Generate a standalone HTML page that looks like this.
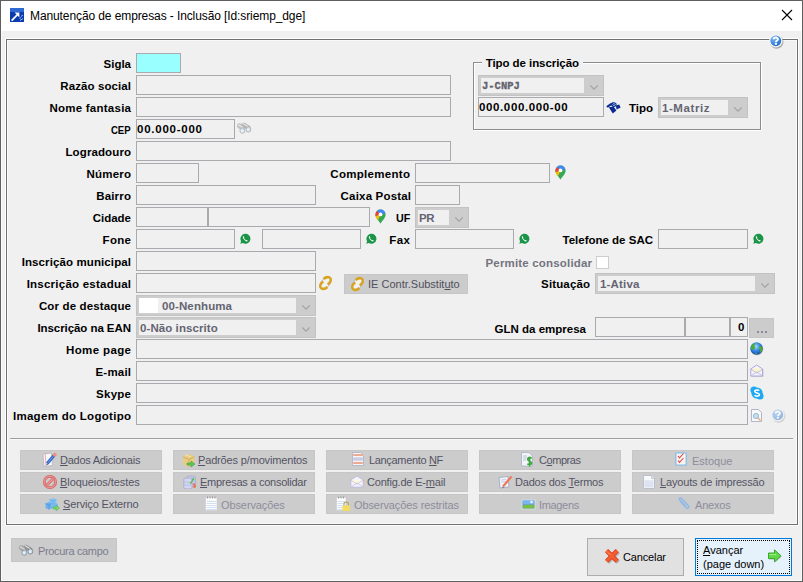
<!DOCTYPE html>
<html><head><meta charset="utf-8">
<style>
*{box-sizing:border-box;margin:0;padding:0}
html,body{width:803px;height:582px;overflow:hidden;background:#f0f0f0;font-family:"Liberation Sans",sans-serif}
.a{position:absolute}
.lbl{position:absolute;font-weight:bold;font-size:11.5px;color:#000;white-space:nowrap;line-height:14px}
.fld{position:absolute;border:1px solid #a9a9ae;background:#f0f0f0}
.ftx{position:absolute;font-weight:bold;font-size:11.5px;white-space:nowrap;line-height:14px;color:#000}
.ctx{color:#646472}
.mono{font-family:"Liberation Mono",monospace;font-size:10.5px;color:#62626e;-webkit-text-stroke:0.3px #62626e}
.cmb{position:absolute;background:#cdcdcd;border:1px solid #c3c3c3}
.bt{position:absolute;font-size:11px;white-space:nowrap;line-height:14px;color:#545464}
u{text-decoration:underline;text-underline-offset:1px}
</style></head><body>

<div class="a" style="left:0;top:0;width:803px;height:582px;border:1px solid #5f5f5f;box-shadow:inset 0 0 0 1px #fafafa"></div>
<div class="a" style="left:1px;top:1px;width:801px;height:30px;background:#fff"></div>
<svg class="a" style="left:10px;top:8px" width="14" height="14" viewBox="0 0 14 14"><rect width="14" height="14" fill="#0a3cae"/><rect width="14" height="4" fill="#2f6ad4"/><path d="M1.6 12.6 L8 6.2" stroke="#fff" stroke-width="1.7" fill="none"/><path d="M4.6 4.6 L9.4 4.6 L9.4 9.4 Z" fill="#fff"/><path d="M11 8.5 l2 -1.5 M10 12.5 l3 -2 M9.5 10.5 l1.5 -1" stroke="#9ab8f0" stroke-width="1"/></svg>
<div class="a" style="left:30px;top:9px;font-size:12px;line-height:15px;color:#000;letter-spacing:-0.1px;white-space:nowrap">Manutenção de empresas - Inclusão [Id:sriemp_dge]</div>
<svg class="a" style="left:781px;top:9px" width="12" height="12"><path d="M1 1 L11 11 M11 1 L1 11" stroke="#000" stroke-width="1.1"/></svg>
<div class="a" style="left:6px;top:39px;width:792px;height:486px;border:1px solid #707070;box-shadow:inset 0 0 0 1px #f9f9f9,0 0 0 1px #fff"></div>
<svg class="a" style="left:768px;top:33px;" width="16" height="16" viewBox="0 0 16 16"><defs><radialGradient id="hg768" cx="0.35" cy="0.3" r="0.8"><stop offset="0" stop-color="#7ab8f4"/><stop offset="0.6" stop-color="#3f8ae0"/><stop offset="1" stop-color="#1a5cc0"/></radialGradient></defs><circle cx="8.6" cy="8.8" r="6.9" fill="#707070" opacity="0.55"/><circle cx="7.8" cy="7.8" r="6.8" fill="#f4f4f4"/><circle cx="7.8" cy="7.8" r="5.4" fill="url(#hg768)"/><path d="M5.6 6.3 C5.6 3.9 10 3.9 10 6.3 C10 7.6 7.9 7.6 7.9 9.2" stroke="#fff" stroke-width="1.9" fill="none"/><rect x="6.9" y="10" width="2" height="1.8" fill="#fff"/></svg>
<div class="lbl" style="right:672.00px;top:57px;color:#000;letter-spacing:0.0px">Sigla</div>
<div class="lbl" style="right:671.91px;top:79px;color:#000;letter-spacing:0.091px">Razão social</div>
<div class="lbl" style="right:671.75px;top:101px;color:#000;letter-spacing:0.25px">Nome fantasia</div>
<div class="lbl" style="right:672.00px;top:123px;color:#000;letter-spacing:0px;transform:scaleX(0.833);transform-origin:100% 50%">CEP</div>
<div class="lbl" style="right:671.89px;top:145px;color:#000;letter-spacing:0.111px">Logradouro</div>
<div class="lbl" style="right:671.80px;top:167px;color:#000;letter-spacing:0.2px">Número</div>
<div class="lbl" style="right:671.80px;top:189px;color:#000;letter-spacing:0.2px">Bairro</div>
<div class="lbl" style="right:672.00px;top:211px;color:#000;letter-spacing:0.0px">Cidade</div>
<div class="lbl" style="right:671.67px;top:233px;color:#000;letter-spacing:0.333px">Fone</div>
<div class="lbl" style="right:671.89px;top:255px;color:#000;letter-spacing:0.111px">Inscrição municipal</div>
<div class="lbl" style="right:671.76px;top:277px;color:#000;letter-spacing:0.235px">Inscrição estadual</div>
<div class="lbl" style="right:671.86px;top:299px;color:#000;letter-spacing:0.143px">Cor de destaque</div>
<div class="lbl" style="right:672.07px;top:321px;color:#000;letter-spacing:-0.067px">Inscrição na EAN</div>
<div class="lbl" style="right:671.62px;top:343px;color:#000;letter-spacing:0.375px">Home page</div>
<div class="lbl" style="right:671.80px;top:365px;color:#000;letter-spacing:0.2px">E-mail</div>
<div class="lbl" style="right:671.75px;top:387px;color:#000;letter-spacing:0.25px">Skype</div>
<div class="lbl" style="right:671.71px;top:409px;color:#000;letter-spacing:0.294px">Imagem do Logotipo</div>
<div class="fld" style="left:136px;top:53px;width:45px;height:20px;background:#99ffff"></div>
<div class="fld" style="left:136px;top:75px;width:315px;height:20px"></div>
<div class="fld" style="left:136px;top:97px;width:315px;height:20px"></div>
<div class="fld" style="left:136px;top:119px;width:99px;height:20px"></div>
<div class="ftx" style="left:137px;top:122px;letter-spacing:0.75px">00.000-000</div>
<svg class="a" style="left:236px;top:122px;opacity:0.6" width="16" height="12" viewBox="0 0 16 12"><path d="M1 3.2 C1 1.6 3 1 4.5 1.6 L9.5 4.8 L7 9 L2 6 C1.3 5.5 1 4.5 1 3.2 Z" fill="#a4a4a4"/><path d="M5.5 1.8 C6 0.6 8 0.4 9 1 L14.6 4.6 L12.5 8.6 L7.5 5.4 Z" fill="#8e8e8e"/><path d="M2 2.6 L7 5.6 M6.6 1.4 L12 4.6" stroke="#f2f2f2" stroke-width="1.1"/><ellipse cx="6.4" cy="8.6" rx="2.5" ry="2.7" fill="#c4dcf4" stroke="#7c7c7c" stroke-width="0.7"/><ellipse cx="12.4" cy="7.4" rx="2.4" ry="2.7" fill="#c4dcf4" stroke="#6c6c6c" stroke-width="0.7"/><ellipse cx="6" cy="9" rx="1.2" ry="1.3" fill="#eaf4ff"/><ellipse cx="12" cy="7.8" rx="1.2" ry="1.3" fill="#eaf4ff"/></svg>
<div class="fld" style="left:136px;top:141px;width:315px;height:20px"></div>
<div class="fld" style="left:136px;top:163px;width:63px;height:20px"></div>
<div class="lbl" style="right:392.70px;top:167px;color:#000;letter-spacing:0.3px">Complemento</div>
<div class="fld" style="left:415px;top:163px;width:135px;height:20px"></div>
<svg class="a" style="left:555px;top:165px" width="11" height="15" viewBox="0 0 11 15"><defs><clipPath id="pc555165"><path d="M5.5 14.8 C4.6 12.4 0.4 9.4 0.4 5.5 A5.1 5.1 0 0 1 10.6 5.5 C10.6 9.4 6.4 12.4 5.5 14.8 Z"/></clipPath></defs><g clip-path="url(#pc555165)"><rect width="11" height="15" fill="#34a853"/><path d="M0 0 L11 0 L11 4.2 L5.5 5.5 L1.2 1.6 Z" fill="#4285f4"/><path d="M0 0 L1.2 1.6 L5.5 5.5 L0 7.6 Z" fill="#ea4335"/><path d="M0 7.6 L5.5 5.5 L2.6 12 L0 12 Z" fill="#fbbc04"/></g><circle cx="5.5" cy="5.4" r="1.9" fill="#fff"/></svg>
<div class="fld" style="left:136px;top:185px;width:180px;height:20px"></div>
<div class="lbl" style="right:391.82px;top:189px;color:#000;letter-spacing:0.182px">Caixa Postal</div>
<div class="fld" style="left:415px;top:185px;width:45px;height:20px"></div>
<div class="fld" style="left:136px;top:207px;width:72px;height:20px"></div>
<div class="fld" style="left:208px;top:207px;width:162px;height:20px"></div>
<svg class="a" style="left:375px;top:209px" width="11" height="15" viewBox="0 0 11 15"><defs><clipPath id="pc375209"><path d="M5.5 14.8 C4.6 12.4 0.4 9.4 0.4 5.5 A5.1 5.1 0 0 1 10.6 5.5 C10.6 9.4 6.4 12.4 5.5 14.8 Z"/></clipPath></defs><g clip-path="url(#pc375209)"><rect width="11" height="15" fill="#34a853"/><path d="M0 0 L11 0 L11 4.2 L5.5 5.5 L1.2 1.6 Z" fill="#4285f4"/><path d="M0 0 L1.2 1.6 L5.5 5.5 L0 7.6 Z" fill="#ea4335"/><path d="M0 7.6 L5.5 5.5 L2.6 12 L0 12 Z" fill="#fbbc04"/></g><circle cx="5.5" cy="5.4" r="1.9" fill="#fff"/></svg>
<div class="lbl" style="right:393.00px;top:211px;color:#000;letter-spacing:0px;transform:scaleX(0.933);transform-origin:100% 50%">UF</div>
<div class="cmb" style="left:415px;top:207px;width:54px;height:21px"></div>
<div class="a" style="left:418px;top:210px;width:31px;height:15px;background:#f0f0f0"></div>
<svg class="a" style="left:455px;top:217px" width="8" height="5"><path d="M0.3 0.5 L4 4.2 L7.7 0.5" fill="none" stroke="#a2a2a2" stroke-width="1.1"/></svg>
<div class="ftx ctx" style="left:419px;top:211px;letter-spacing:-0.45px">PR</div>
<div class="fld" style="left:136px;top:229px;width:99px;height:20px"></div>
<svg class="a" style="left:239px;top:233px" width="12" height="12" viewBox="0 0 12 12"><path d="M1.3 10.8 L2.1 8.3 A5 5 0 1 1 3.9 10.1 Z" fill="#1a9548"/><path d="M3.9 3.3 C3.5 4.6 4.6 6.8 7 8.2 C7.9 8.6 8.6 8.3 8.8 7.7 L7.8 6.9 L7.1 7.3 C6.1 6.8 5.3 6 4.9 5 L5.4 4.4 L4.6 3.2 Z" fill="#fff"/></svg>
<div class="fld" style="left:262px;top:229px;width:99px;height:20px"></div>
<svg class="a" style="left:365px;top:233px" width="12" height="12" viewBox="0 0 12 12"><path d="M1.3 10.8 L2.1 8.3 A5 5 0 1 1 3.9 10.1 Z" fill="#1a9548"/><path d="M3.9 3.3 C3.5 4.6 4.6 6.8 7 8.2 C7.9 8.6 8.6 8.3 8.8 7.7 L7.8 6.9 L7.1 7.3 C6.1 6.8 5.3 6 4.9 5 L5.4 4.4 L4.6 3.2 Z" fill="#fff"/></svg>
<div class="lbl" style="right:392.50px;top:233px;color:#000;letter-spacing:0.5px">Fax</div>
<div class="fld" style="left:415px;top:229px;width:99px;height:20px"></div>
<svg class="a" style="left:518px;top:233px" width="12" height="12" viewBox="0 0 12 12"><path d="M1.3 10.8 L2.1 8.3 A5 5 0 1 1 3.9 10.1 Z" fill="#1a9548"/><path d="M3.9 3.3 C3.5 4.6 4.6 6.8 7 8.2 C7.9 8.6 8.6 8.3 8.8 7.7 L7.8 6.9 L7.1 7.3 C6.1 6.8 5.3 6 4.9 5 L5.4 4.4 L4.6 3.2 Z" fill="#fff"/></svg>
<div class="lbl" style="right:150.00px;top:233px;color:#000;letter-spacing:0.0px">Telefone de SAC</div>
<div class="fld" style="left:658px;top:229px;width:90px;height:20px"></div>
<svg class="a" style="left:752px;top:233px" width="12" height="12" viewBox="0 0 12 12"><path d="M1.3 10.8 L2.1 8.3 A5 5 0 1 1 3.9 10.1 Z" fill="#1a9548"/><path d="M3.9 3.3 C3.5 4.6 4.6 6.8 7 8.2 C7.9 8.6 8.6 8.3 8.8 7.7 L7.8 6.9 L7.1 7.3 C6.1 6.8 5.3 6 4.9 5 L5.4 4.4 L4.6 3.2 Z" fill="#fff"/></svg>
<div class="fld" style="left:136px;top:251px;width:180px;height:20px"></div>
<div class="lbl" style="right:210.82px;top:256px;color:#74747f;letter-spacing:0.176px">Permite consolidar</div>
<div class="a" style="left:596px;top:256px;width:13px;height:13px;border:1px solid #cdcdcd;background:#fff"></div>
<div class="fld" style="left:136px;top:273px;width:180px;height:20px"></div>
<svg class="a" style="left:318px;top:275px" width="15" height="16" viewBox="0 0 15 16"><ellipse cx="7.5" cy="8" rx="7.4" ry="4.3" transform="rotate(-50 7.5 8)" fill="#f2f2f2" stroke="#a0a0a0" stroke-width="0.6"/><path d="M5.6 4 C8.6 1 13.8 1.6 12.6 6.2 C12.1 7.8 10.8 8.8 9.6 9.4" stroke="#d8a420" stroke-width="2.5" fill="none"/><path d="M9.4 12 C6.4 15 1.2 14.4 2.4 9.8 C2.9 8.2 4.2 7.2 5.4 6.6" stroke="#d8a420" stroke-width="2.5" fill="none"/></svg>
<div class="a" style="left:344px;top:274px;width:124px;height:20px;background:#cccccc;border:1px solid #c6c6c6"></div>
<svg class="a" style="left:350px;top:276px" width="15" height="16" viewBox="0 0 15 16"><ellipse cx="7.5" cy="8" rx="7.4" ry="4.3" transform="rotate(-50 7.5 8)" fill="#f2f2f2" stroke="#a0a0a0" stroke-width="0.6"/><path d="M5.6 4 C8.6 1 13.8 1.6 12.6 6.2 C12.1 7.8 10.8 8.8 9.6 9.4" stroke="#d8a420" stroke-width="2.5" fill="none"/><path d="M9.4 12 C6.4 15 1.2 14.4 2.4 9.8 C2.9 8.2 4.2 7.2 5.4 6.6" stroke="#d8a420" stroke-width="2.5" fill="none"/></svg>
<div class="bt" style="left:368px;top:277px;color:#4f4f5e;letter-spacing:0.0px">IE Contr.Substit<u>u</u>to</div>
<div class="lbl" style="right:212.86px;top:277px;color:#000;letter-spacing:0.143px">Situação</div>
<div class="cmb" style="left:595px;top:273px;width:180px;height:21px"></div>
<div class="a" style="left:598px;top:276px;width:157px;height:15px;background:#f0f0f0"></div>
<svg class="a" style="left:761px;top:283px" width="8" height="5"><path d="M0.3 0.5 L4 4.2 L7.7 0.5" fill="none" stroke="#a2a2a2" stroke-width="1.1"/></svg>
<div class="ftx ctx" style="left:600px;top:277px;letter-spacing:0.167px">1-Ativa</div>
<div class="cmb" style="left:136px;top:295px;width:180px;height:21px"></div>
<div class="a" style="left:139px;top:298px;width:157px;height:15px;background:#f0f0f0"></div>
<svg class="a" style="left:302px;top:305px" width="8" height="5"><path d="M0.3 0.5 L4 4.2 L7.7 0.5" fill="none" stroke="#a2a2a2" stroke-width="1.1"/></svg>
<div class="a" style="left:139px;top:298px;width:19px;height:15px;background:#fff"></div>
<div class="ftx ctx" style="left:162px;top:299px;letter-spacing:0.111px">00-Nenhuma</div>
<div class="cmb" style="left:136px;top:317px;width:180px;height:21px"></div>
<div class="a" style="left:139px;top:320px;width:157px;height:15px;background:#f0f0f0"></div>
<svg class="a" style="left:302px;top:327px" width="8" height="5"><path d="M0.3 0.5 L4 4.2 L7.7 0.5" fill="none" stroke="#a2a2a2" stroke-width="1.1"/></svg>
<div class="ftx ctx" style="left:140px;top:321px;letter-spacing:0.077px">0-Não inscrito</div>
<div class="lbl" style="right:217.00px;top:322px;color:#000;letter-spacing:0.0px">GLN da empresa</div>
<div class="fld" style="left:595px;top:317px;width:90px;height:20px"></div>
<div class="fld" style="left:685px;top:317px;width:45px;height:20px"></div>
<div class="fld" style="left:730px;top:317px;width:18px;height:20px"></div>
<div class="ftx" style="left:738px;top:320px;">0</div>
<div class="a" style="left:749px;top:318px;width:25px;height:20px;background:#cccccc;border:1px solid #c6c6c6"></div>
<div class="a" style="left:757px;top:331px;width:10px;height:2px;background:repeating-linear-gradient(90deg,#8a8a9c 0 2px,transparent 2px 4px)"></div>
<div class="fld" style="left:136px;top:339px;width:612px;height:20px"></div>
<div class="fld" style="left:136px;top:361px;width:612px;height:20px"></div>
<div class="fld" style="left:136px;top:383px;width:612px;height:20px"></div>
<div class="fld" style="left:136px;top:405px;width:612px;height:20px"></div>
<svg class="a" style="left:750px;top:342px" width="14" height="14" viewBox="0 0 14 14"><defs><radialGradient id="gl" cx="0.45" cy="0.35" r="0.65"><stop offset="0" stop-color="#a8d8ff"/><stop offset="0.5" stop-color="#3a8ae8"/><stop offset="1" stop-color="#1548b0"/></radialGradient></defs><circle cx="7" cy="7" r="6.3" fill="#555" opacity="0.35"/><circle cx="6.5" cy="6.5" r="6.2" fill="url(#gl)"/><path d="M1 5 C1.5 3 3 1.5 4.5 1.3 C5.5 2 5 3 4 3.3 C5 4.5 5.5 6 4.5 7 C3.5 8 2 7.5 1.2 7 Z" fill="#48b030"/><path d="M9.5 4.5 C10.5 4 12 5 12.6 6.5 C12.5 8.5 11.5 10 10 10.8 C9.5 9.5 10.5 8.5 9.8 7.5 C9 6.5 8.8 5.2 9.5 4.5 Z" fill="#48b030"/><path d="M5 10.5 L7 11 L6.5 12.3 L5 11.8 Z M7 1.2 L8.5 1.5 L8 2.5 Z" fill="#48b030"/></svg>
<svg class="a" style="left:750px;top:364px" width="14" height="13" viewBox="0 0 14 13"><path d="M1.6 5.6 L7.2 1.8 L13.4 5.6 L13.4 12.8 L1.6 12.8 Z" fill="#505050" opacity="0.25"/><path d="M0.8 5 L6.6 1 L12.6 5 L12.6 12 L0.8 12 Z" fill="#f4f4fc" stroke="#a4a0dc" stroke-width="0.9"/><path d="M2.4 4.4 L11 4.4 L11 7.2 L6.7 9.2 L2.4 7.2 Z" fill="#fbf2c8"/><path d="M0.8 12 L6.7 7.8 L12.6 12 M0.8 5 L6.7 9.2 L12.6 5" fill="none" stroke="#b8b4e4" stroke-width="0.8"/></svg>
<svg class="a" style="left:750px;top:386px" width="14" height="14" viewBox="0 0 14 14"><circle cx="4" cy="4" r="3.6" fill="#1eaaf1"/><circle cx="10" cy="10" r="3.6" fill="#1eaaf1"/><circle cx="7" cy="7" r="5.6" fill="#1eaaf1"/><path d="M9.2 4.6 C8.5 3.6 4.6 3.5 4.7 5.4 C4.8 7.4 9.4 6.4 9.4 8.6 C9.4 10.6 5.4 10.5 4.6 9.2" stroke="#fff" stroke-width="1.5" fill="none"/></svg>
<svg class="a" style="left:751px;top:409px" width="12" height="13" viewBox="0 0 12 13"><path d="M0.5 0.5 L7.5 0.5 L10.5 3.5 L10.5 12.5 L0.5 12.5 Z" fill="#f6f8fb" stroke="#a7b0bd" stroke-width="0.9"/><circle cx="5" cy="7" r="2.6" fill="#bfe0f5" stroke="#8fa8c0" stroke-width="0.8"/><path d="M7 9 L9.5 11.5" stroke="#f0a060" stroke-width="1.3"/></svg>
<svg class="a" style="left:770px;top:407px;opacity:0.45;" width="16" height="16" viewBox="0 0 16 16"><defs><radialGradient id="hg770" cx="0.35" cy="0.3" r="0.8"><stop offset="0" stop-color="#7ab8f4"/><stop offset="0.6" stop-color="#3f8ae0"/><stop offset="1" stop-color="#1a5cc0"/></radialGradient></defs><circle cx="8.6" cy="8.8" r="6.9" fill="#707070" opacity="0.55"/><circle cx="7.8" cy="7.8" r="6.8" fill="#f4f4f4"/><circle cx="7.8" cy="7.8" r="5.4" fill="url(#hg770)"/><path d="M5.6 6.3 C5.6 3.9 10 3.9 10 6.3 C10 7.6 7.9 7.6 7.9 9.2" stroke="#fff" stroke-width="1.9" fill="none"/><rect x="6.9" y="10" width="2" height="1.8" fill="#fff"/></svg>
<div class="a" style="left:10px;top:438px;width:783px;height:2px;border-top:1px solid #a0a0a0;border-bottom:1px solid #f8f8f8"></div>
<div class="a" style="left:473px;top:62px;width:288px;height:68px;border:1px solid #8c8c8c;box-shadow:inset 1px 1px 0 #fff,1px 1px 0 #fff"></div>
<div class="a" style="left:482px;top:56px;width:101px;height:12px;background:#f0f0f0"></div>
<div class="lbl" style="right:224.06px;top:56px;color:#000;letter-spacing:-0.062px">Tipo de inscrição</div>
<div class="cmb" style="left:478px;top:75px;width:126px;height:21px"></div>
<div class="a" style="left:481px;top:78px;width:103px;height:15px;background:#f0f0f0"></div>
<svg class="a" style="left:590px;top:85px" width="8" height="5"><path d="M0.3 0.5 L4 4.2 L7.7 0.5" fill="none" stroke="#a2a2a2" stroke-width="1.1"/></svg>
<div class="ftx mono" style="left:482px;top:79px;">J-CNPJ</div>
<div class="fld" style="left:478px;top:97px;width:126px;height:20px"></div>
<div class="ftx" style="left:479px;top:100px;letter-spacing:0.62px">000.000.000-00</div>
<svg class="a" style="left:606px;top:102px" width="15" height="12" viewBox="0 0 15 12"><path d="M0.2 4.2 L4.8 1 L6.5 2.6 L1.8 5.8 Z" fill="#0a2a90"/><path d="M5 1.4 C6 -0.2 9.5 -0.2 10.5 1.8 C11 3.2 10 4.8 8 5 C6.5 5 5.2 3.8 5 2.6 Z" fill="#0a2a90"/><path d="M6.6 2.6 C7.2 1.2 9.2 1.4 9.3 2.6 C9 3.6 7.6 3.8 7 3.2" stroke="#c8d4f4" stroke-width="0.8" fill="none"/><path d="M9.8 3.6 L13.2 2.4 L14.6 5.6 L10.6 7.4 Z" fill="#0a2a90"/><path d="M2.8 5.2 L7.5 4.6 L10.4 8.6 L6.8 11.6 Z" fill="#0a2a90"/></svg>
<div class="lbl" style="right:150.00px;top:101px;color:#000;letter-spacing:0.0px">Tipo</div>
<div class="cmb" style="left:658px;top:97px;width:90px;height:21px"></div>
<div class="a" style="left:661px;top:100px;width:67px;height:15px;background:#f0f0f0"></div>
<svg class="a" style="left:734px;top:107px" width="8" height="5"><path d="M0.3 0.5 L4 4.2 L7.7 0.5" fill="none" stroke="#a2a2a2" stroke-width="1.1"/></svg>
<div class="ftx ctx" style="left:662px;top:101px;letter-spacing:0.571px">1-Matriz</div>
<div class="a" style="left:20px;top:450px;width:142px;height:20px;background:#cccccc;border:1px solid #c6c6c6"></div>
<div class="a" style="left:173px;top:450px;width:142px;height:20px;background:#cccccc;border:1px solid #c6c6c6"></div>
<div class="a" style="left:326px;top:450px;width:142px;height:20px;background:#cccccc;border:1px solid #c6c6c6"></div>
<div class="a" style="left:479px;top:450px;width:142px;height:20px;background:#cccccc;border:1px solid #c6c6c6"></div>
<div class="a" style="left:632px;top:450px;width:142px;height:20px;background:#cccccc;border:1px solid #c6c6c6"></div>
<div class="a" style="left:20px;top:472px;width:142px;height:20px;background:#cccccc;border:1px solid #c6c6c6"></div>
<div class="a" style="left:173px;top:472px;width:142px;height:20px;background:#cccccc;border:1px solid #c6c6c6"></div>
<div class="a" style="left:326px;top:472px;width:142px;height:20px;background:#cccccc;border:1px solid #c6c6c6"></div>
<div class="a" style="left:479px;top:472px;width:142px;height:20px;background:#cccccc;border:1px solid #c6c6c6"></div>
<div class="a" style="left:632px;top:472px;width:142px;height:20px;background:#cccccc;border:1px solid #c6c6c6"></div>
<div class="a" style="left:20px;top:494px;width:142px;height:20px;background:#cccccc;border:1px solid #c6c6c6"></div>
<div class="a" style="left:173px;top:494px;width:142px;height:20px;background:#cccccc;border:1px solid #c6c6c6"></div>
<div class="a" style="left:326px;top:494px;width:142px;height:20px;background:#cccccc;border:1px solid #c6c6c6"></div>
<div class="a" style="left:479px;top:494px;width:142px;height:20px;background:#cccccc;border:1px solid #c6c6c6"></div>
<div class="a" style="left:632px;top:494px;width:142px;height:20px;background:#cccccc;border:1px solid #c6c6c6"></div>
<div class="bt" style="left:60px;top:453px;color:#545464;letter-spacing:-0.267px"><u>D</u>ados Adicionais</div>
<div class="bt" style="left:198px;top:453px;color:#545464;letter-spacing:-0.158px"><u>P</u>adrões p/movimentos</div>
<div class="bt" style="left:369px;top:453px;color:#545464;letter-spacing:-0.333px">Lançamento <u>N</u>F</div>
<div class="bt" style="left:539px;top:453px;color:#545464;letter-spacing:-0.45px">C<u>o</u>mpras</div>
<div class="bt" style="left:692px;top:454px;color:#8c8c9c;letter-spacing:0.0px">Estoque</div>
<div class="bt" style="left:60px;top:475px;color:#545464;letter-spacing:-0.067px"><u>B</u>loqueios/testes</div>
<div class="bt" style="left:200px;top:475px;color:#545464;letter-spacing:-0.25px"><u>E</u>mpresas a consolidar</div>
<div class="bt" style="left:367px;top:475px;color:#545464;letter-spacing:-0.2px">Config.de E-<u>m</u>ail</div>
<div class="bt" style="left:515px;top:475px;color:#545464;letter-spacing:-0.2px">Dados dos <u>T</u>ermos</div>
<div class="bt" style="left:660px;top:475px;color:#545464;letter-spacing:-0.158px"><u>L</u>ayouts de impressão</div>
<div class="bt" style="left:63px;top:497px;color:#545464;letter-spacing:-0.143px"><u>S</u>erviço Externo</div>
<div class="bt" style="left:221px;top:498px;color:#8c8c9c;letter-spacing:-0.1px">Observações</div>
<div class="bt" style="left:354px;top:498px;color:#8c8c9c;letter-spacing:-0.1px">Observações restritas</div>
<div class="bt" style="left:539px;top:498px;color:#8c8c9c;letter-spacing:-0.333px">Imagens</div>
<div class="bt" style="left:695px;top:498px;color:#8c8c9c;letter-spacing:-0.2px">Anexos</div>
<svg class="a" style="left:42px;top:452px" width="15" height="15" viewBox="0 0 15 15"><path d="M1 2 L9.5 1 L10.5 13.5 L2 14.5 Z" fill="#f8f8fa" stroke="#b4b4c4" stroke-width="0.8"/>
<path d="M3.2 2 L4 14" stroke="#e89a9a" stroke-width="0.8"/>
<path d="M5.2 11.5 L12 3.5" stroke="#3a68c8" stroke-width="3.2"/>
<path d="M6 10.6 L11.4 4.2" stroke="#6a9ae8" stroke-width="1"/>
<circle cx="12.8" cy="2.6" r="1.9" fill="#f0907a"/>
<path d="M5 11.6 L4.2 13.4 L6.2 12.6 Z" fill="#405080"/></svg>
<svg class="a" style="left:43px;top:475px" width="14" height="14" viewBox="0 0 14 14"><circle cx="7" cy="7" r="5.6" fill="none" stroke="#cf6464" stroke-width="2.8"/>
<circle cx="7" cy="7" r="5.6" fill="none" stroke="#ec9090" stroke-width="1.4"/>
<path d="M3.3 10.7 L10.7 3.3" stroke="#d46a6a" stroke-width="3"/>
<path d="M3.8 10.2 L10.2 3.8" stroke="#ee9494" stroke-width="1.4"/></svg>
<svg class="a" style="left:45px;top:497px" width="15" height="14" viewBox="0 0 15 14"><path d="M4.5 2.5 L8 1 L11.5 2.5 L11.5 7 L8 8.5 L4.5 7 Z" fill="#88c4f4"/>
<path d="M4.5 2.5 L8 4 L11.5 2.5 M8 4 L8 8.5" stroke="#5aa0e0" stroke-width="0.6" fill="none"/>
<path d="M0.5 6.5 L4 5 L7.5 6.5 L7.5 11 L4 12.5 L0.5 11 Z" fill="#6cb0ee"/>
<path d="M0.5 6.5 L4 8 L7.5 6.5 M4 8 L4 12.5" stroke="#4a90d8" stroke-width="0.6" fill="none"/>
<path d="M6 7 L9.5 5.5 L13 7 L13 10 L9.5 11.5 L6 10 Z" fill="#78baf0"/>
<path d="M8 10 L11 10 L11 8.2 L14.5 11 L11 13.8 L11 12 L8 12 Z" fill="#78d86a" stroke="#4cb044" stroke-width="0.5"/></svg>
<svg class="a" style="left:182px;top:453px" width="14" height="15" viewBox="0 0 14 15"><path d="M1 4 L6.5 1 L12.5 3.5 L12.5 11 L7 14 L1 11.5 Z" fill="#e8cc80"/>
<path d="M1 4 L7 6.5 L12.5 3.5 M7 6.5 L7 14" stroke="#c8a45a" stroke-width="0.7" fill="none"/>
<path d="M3 1.5 L9 4" stroke="#f4e0a8" stroke-width="1.2"/>
<path d="M5 10 L9 10 L9 8 L13 11 L9 14 L9 12 L5 12 Z" fill="#58c858" stroke="#3a9a3a" stroke-width="0.5"/></svg>
<svg class="a" style="left:183px;top:475px" width="14" height="14" viewBox="0 0 14 14"><path d="M4 2 C4 0.8 12.5 0.8 12.5 2 L12.5 11 C12.5 12.2 4 12.2 4 11 Z" fill="#c4c8e8" stroke="#9a9ec8" stroke-width="0.6"/>
<path d="M0.8 4 C0.8 2.8 9 2.8 9 4 L9 13 C9 14.2 0.8 14.2 0.8 13 Z" fill="#d4d6f0" stroke="#9a9ec8" stroke-width="0.6"/>
<path d="M0.8 6.5 C0.8 7.5 9 7.5 9 6.5 M0.8 9.5 C0.8 10.5 9 10.5 9 9.5" stroke="#a8acd4" stroke-width="0.6" fill="none"/>
<path d="M6.5 8.5 L9.5 4.5 L8 4.5 L10.5 2.5 L11.5 5.5 L10.5 5 L8 9 Z" fill="#54c054"/>
<path d="M9.5 9 L12 8 L12.5 11 L13.5 10.5 L12 13.5 L9.5 11.5 L11 11.5 Z" fill="#f07050"/></svg>
<svg class="a" style="left:205px;top:496px" width="13" height="15" viewBox="0 0 13 15"><path d="M0.5 1.5 L12 1.5 L12 14.5 L0.5 14.5 Z" fill="#fdfdfd" stroke="#c8c8d0" stroke-width="0.6"/>
<path d="M1.5 5.5 L11 5.5 M1.5 7.5 L11 7.5 M1.5 9.5 L11 9.5 M1.5 11.5 L11 11.5 M1.5 13.5 L11 13.5" stroke="#c4d8ec" stroke-width="0.8"/>
<path d="M2.5 0.5 L2.5 2.5 M5 0.5 L5 2.5 M7.5 0.5 L7.5 2.5 M10 0.5 L10 2.5" stroke="#888" stroke-width="0.8"/></svg>
<svg class="a" style="left:352px;top:452px" width="12" height="14" viewBox="0 0 12 14"><path d="M0.5 0.5 L8.5 0.5 L11.5 3.5 L11.5 13.5 L0.5 13.5 Z" fill="#f6f6fa" stroke="#a8b0c0" stroke-width="0.8"/>
<path d="M1.2 3 L10.8 3" stroke="#f0a890" stroke-width="2"/>
<path d="M1.2 7 L10.8 7" stroke="#c8cee0" stroke-width="3.5"/>
<path d="M1.2 11 L10.8 11" stroke="#f0a890" stroke-width="2"/></svg>
<svg class="a" style="left:350px;top:475px" width="14" height="13" viewBox="0 0 14 13"><path d="M0.8 5 L7 1 L13.2 5 L13.2 12.2 L0.8 12.2 Z" fill="#f4f2fc" stroke="#b8b4d8" stroke-width="0.8"/>
<path d="M2.5 4.5 L11.5 4.5 L11.5 7.5 L7 9.5 L2.5 7.5 Z" fill="#fdf8e4"/>
<path d="M0.8 12.2 L7 7.8 L13.2 12.2 M0.8 5 L7 9.2 L13.2 5" fill="none" stroke="#c4c0e0" stroke-width="0.8"/></svg>
<svg class="a" style="left:336px;top:496px" width="14" height="15" viewBox="0 0 14 15"><path d="M0.5 1.5 L10 1.5 L10 14.5 L0.5 14.5 Z" fill="#fdfdfd" stroke="#c8c8d0" stroke-width="0.6"/>
<path d="M1.5 5.5 L9 5.5 M1.5 7.5 L9 7.5 M1.5 9.5 L9 9.5 M1.5 11.5 L9 11.5 M1.5 13.5 L9 13.5" stroke="#c4d8ec" stroke-width="0.8"/>
<path d="M2.5 0.5 L2.5 2.5 M5 0.5 L5 2.5 M7.5 0.5 L7.5 2.5" stroke="#888" stroke-width="0.8"/>
<path d="M8 9.5 L8 8 C8 5.5 12.5 5.5 12.5 8 L12.5 9.5" fill="none" stroke="#b8a860" stroke-width="1.2"/>
<rect x="6.5" y="9.5" width="7.5" height="5.5" fill="#f4dc60"/></svg>
<svg class="a" style="left:521px;top:452px" width="12" height="15" viewBox="0 0 12 15"><path d="M0.5 0.5 L8 0.5 L11.5 4 L11.5 14 L0.5 14 Z" fill="#f2f4fa" stroke="#a8b0c0" stroke-width="0.8"/>
<path d="M2 4 L6 4 M2 6 L6 6 M2 8 L5 8" stroke="#b0b8cc" stroke-width="0.8"/>
<path d="M10.5 6.5 C10 5.2 6.5 5.2 6.8 7.6 C7 9.4 10.6 9 10.6 11 C10.6 13 7 12.8 6.5 11.6 M8.6 4.5 L8.6 14.5" stroke="#3aa83a" stroke-width="1.6" fill="none"/></svg>
<svg class="a" style="left:498px;top:475px" width="15" height="14" viewBox="0 0 15 14"><path d="M1 2.5 L10 1.5 L11 12 L2 13 Z" fill="#eef2fa" stroke="#9aa4c0" stroke-width="0.8"/>
<path d="M3 5 L8 4.5 M3 7 L8 6.5" stroke="#b8c0d8" stroke-width="0.7"/>
<path d="M5 11.5 L13.5 1.5" stroke="#f07858" stroke-width="2.2"/>
<path d="M5 11.5 L4 13 L5.8 12.3 Z" fill="#444"/></svg>
<svg class="a" style="left:521px;top:499px" width="15" height="11" viewBox="0 0 15 11"><rect x="0.5" y="0.5" width="14" height="10" fill="#fff" stroke="#c8c8c8" stroke-width="0.6"/>
<rect x="1.5" y="1.5" width="12" height="8" fill="#4a8ed8"/>
<rect x="1.5" y="1.5" width="12" height="4" fill="#7ab4ec"/>
<path d="M1.5 9.5 L1.5 6.5 C5 5 9 5.5 13.5 6 L13.5 9.5 Z" fill="#7cbc48"/>
<circle cx="10.5" cy="3" r="1.3" fill="#eaf6ff"/></svg>
<svg class="a" style="left:675px;top:452px" width="12" height="14" viewBox="0 0 12 14"><rect x="0.8" y="0.8" width="10.4" height="12.4" rx="1" fill="#f8f4f0" stroke="#88bce8" stroke-width="1.3"/>
<path d="M3 4 L4.5 5.8 L8.5 1.5 M3 8.5 L4.5 10.3 L8.5 6" stroke="#e04848" stroke-width="1.1" fill="none"/></svg>
<svg class="a" style="left:643px;top:475px" width="12" height="14" viewBox="0 0 12 14"><path d="M0.5 0.5 L8.5 0.5 L11.5 3.5 L11.5 13.5 L0.5 13.5 Z" fill="#f8f9fd" stroke="#b0b6c8" stroke-width="0.8"/>
<path d="M1.5 6 L10.5 6" stroke="#c8cce0" stroke-width="0.8"/>
<rect x="1.5" y="6.5" width="9" height="6" fill="#dde2f2"/>
<path d="M8.5 0.5 L8.5 3.5 L11.5 3.5" fill="#e8ebf4" stroke="#b0b6c8" stroke-width="0.6"/></svg>
<svg class="a" style="left:676px;top:496px" width="15" height="15" viewBox="0 0 15 15"><path d="M4 5 L10 11.5 C11.5 13 13.5 11.5 12.5 10 L5.5 2.5 C4.5 1.3 2.5 2.3 3.5 3.8 L9.5 10.2" fill="none" stroke="#8cb8e8" stroke-width="1.4"/></svg>
<div class="a" style="left:11px;top:538px;width:106px;height:24px;background:#cccccc;border:1px solid #c6c6c6"></div>
<div class="bt" style="left:38px;top:544px;color:#7c7c8c;letter-spacing:-0.333px">Procura campo</div>
<svg class="a" style="left:18px;top:544px;opacity:0.9" width="16" height="12" viewBox="0 0 16 12"><path d="M1 3.2 C1 1.6 3 1 4.5 1.6 L9.5 4.8 L7 9 L2 6 C1.3 5.5 1 4.5 1 3.2 Z" fill="#a4a4a4"/><path d="M5.5 1.8 C6 0.6 8 0.4 9 1 L14.6 4.6 L12.5 8.6 L7.5 5.4 Z" fill="#8e8e8e"/><path d="M2 2.6 L7 5.6 M6.6 1.4 L12 4.6" stroke="#f2f2f2" stroke-width="1.1"/><ellipse cx="6.4" cy="8.6" rx="2.5" ry="2.7" fill="#c4dcf4" stroke="#7c7c7c" stroke-width="0.7"/><ellipse cx="12.4" cy="7.4" rx="2.4" ry="2.7" fill="#c4dcf4" stroke="#6c6c6c" stroke-width="0.7"/><ellipse cx="6" cy="9" rx="1.2" ry="1.3" fill="#eaf4ff"/><ellipse cx="12" cy="7.8" rx="1.2" ry="1.3" fill="#eaf4ff"/></svg>
<div class="a" style="left:587px;top:538px;width:97px;height:38px;background:#e1e1e1;border:1px solid #adadad"></div>
<div class="bt" style="left:623px;top:550px;color:#000;letter-spacing:-0.143px">Cancelar</div>
<svg class="a" style="left:604px;top:548px" width="17" height="17" viewBox="0 0 17 17"><path d="M2.8 2.8 L13.4 13.4 M13.4 2.8 L2.8 13.4" stroke="#000" opacity="0.2" stroke-width="4.4" transform="translate(0.9 0.9)"/><path d="M2.6 2.6 L13.2 13.2 M13.2 2.6 L2.6 13.2" stroke="#d2341c" stroke-width="4.4"/><path d="M2.6 2.6 L13.2 13.2 M13.2 2.6 L2.6 13.2" stroke="#f65c2c" stroke-width="3"/><path d="M2.8 3.4 L6.6 7.2" stroke="#ff9870" stroke-width="1"/></svg>
<div class="a" style="left:695px;top:538px;width:97px;height:38px;background:#e5f1fb;border:1px solid #0078d7"></div>
<div class="a" style="left:697px;top:540px;width:93px;height:34px;border:1px dotted #000"></div>
<div class="bt" style="left:703px;top:543px;color:#000;line-height:14px"><u>A</u>vançar</div>
<div class="bt" style="left:703px;top:557px;color:#000;line-height:14px">(page down)</div>
<svg class="a" style="left:768px;top:549px" width="15" height="15" viewBox="0 0 15 15"><path d="M0.5 4 L6.5 4 L6.5 0.8 L13 6.8 L6.5 12.8 L6.5 9.6 L0.5 9.6 Z" transform="translate(0.8 0.8)" fill="#000" opacity="0.2"/><path d="M0.5 4 L6.5 4 L6.5 0.8 L13 6.8 L6.5 12.8 L6.5 9.6 L0.5 9.6 Z" fill="#62d84a" stroke="#2ea020" stroke-width="0.9"/><path d="M1.5 5.5 L8 5.5" stroke="#a0f088" stroke-width="1"/></svg>
</body></html>
